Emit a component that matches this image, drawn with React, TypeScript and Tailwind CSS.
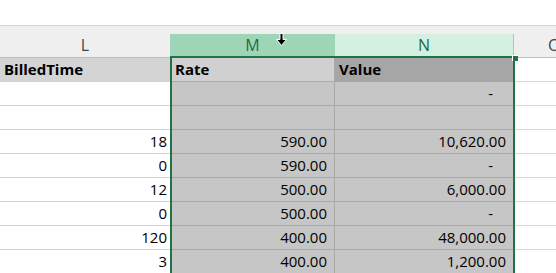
const font = { fontFamily: '"Open Sans", "Liberation Sans", sans-serif' };

type Row = { l: string; m: string; n: string; head?: boolean; dashN?: boolean };

const rows: Row[] = [
  { l: "BilledTime", m: "Rate", n: "Value", head: true },
  { l: "", m: "", n: "-", dashN: true },
  { l: "", m: "", n: "" },
  { l: "18", m: "590.00", n: "10,620.00" },
  { l: "0", m: "590.00", n: "-", dashN: true },
  { l: "12", m: "500.00", n: "6,000.00" },
  { l: "0", m: "500.00", n: "-", dashN: true },
  { l: "120", m: "400.00", n: "48,000.00" },
  { l: "3", m: "400.00", n: "1,200.00" },
];

const SheetRow = ({ row }: { row: Row }) => {
  if (row.head) {
    return (
      <div className="grid grid-cols-[170px_165px_179px_1fr] h-[24px] text-[15px] font-bold text-black">
        <div className="bg-[#d4d4d4] border-b border-[#d4d4d4] pl-1 leading-[23px]">{row.l}</div>
        <div className="bg-[#d0d0d0] border-b border-r border-[#ababab] pl-[5px] leading-[23px]">{row.m}</div>
        <div className="bg-[#a6a6a6] border-b border-[#a6a6a6] pl-[4px] leading-[23px]">{row.n}</div>
        <div className="bg-white border-b border-[#d9d9d9]"></div>
      </div>
    );
  }
  return (
    <div className="grid grid-cols-[170px_165px_179px_1fr] h-[24px] text-[15px] text-black">
      <div className="bg-white border-b border-[#d4d4d4] pr-[3px] text-right leading-[23px]">{row.l}</div>
      <div className="bg-[#c6c6c6] border-b border-r border-[#a9a9a9] pr-[7px] text-right leading-[23px]">{row.m}</div>
      <div
        className={
          row.dashN
            ? "bg-[#c6c6c6] border-b border-[#a9a9a9] pr-[21px] text-right leading-[23px]"
            : "bg-[#c6c6c6] border-b border-[#a9a9a9] pr-[8px] text-right leading-[23px]"
        }
      >
        {row.n}
      </div>
      <div className="bg-white border-b border-[#d9d9d9]"></div>
    </div>
  );
};

export default function App() {
  return (
    <div className="relative w-[556px] h-[273px] overflow-hidden bg-white" style={font}>
      {/* area above the sheet */}
      <div className="h-[25px] bg-white border-b border-[#d5d5d5] box-content"></div>

      {/* column headers */}
      <div className="bg-[#efefef]">
        <div className="h-[8px]"></div>
        <div className="grid grid-cols-[170px_165px_179px_1fr] h-[24px] text-[16px]">
          <div className="border-b border-[#bdbdbd] text-center leading-[23px] text-[#444444]">L</div>
          <div className="bg-[#9fd5b7] border-b border-[#bdbdbd] text-center leading-[23px] text-[#1e6b41]">M</div>
          <div className="bg-[#d3f0e0] border-b border-r border-[#bdbdbd] text-center leading-[23px] text-[#1e6b41]">N</div>
          <div className="border-b border-[#bdbdbd] leading-[23px] text-[#444444] pl-[34px] whitespace-nowrap">O</div>
        </div>
      </div>

      {/* cells */}
      <div className="flex flex-col">
        {rows.map((r, i) => (
          <SheetRow key={i} row={r} />
        ))}
      </div>

      {/* selection outline */}
      <div className="absolute left-[170px] top-[56px] w-[345px] h-[240px] border-2 border-[#217346] pointer-events-none"></div>
      <div className="absolute left-[512px] top-[55px] w-[6px] h-[6px] bg-[#217346] border-l border-t border-white"></div>

      {/* mouse cursor */}
      <svg className="absolute left-[276px] top-[33px]" width="11" height="14" viewBox="0 0 11 14">
        <path d="M4 0.5 H7 V6.5 H10.5 L5.5 12.5 L0.5 6.5 H4 Z" fill="#000" stroke="#fff" strokeWidth="1" />
      </svg>
    </div>
  );
}
